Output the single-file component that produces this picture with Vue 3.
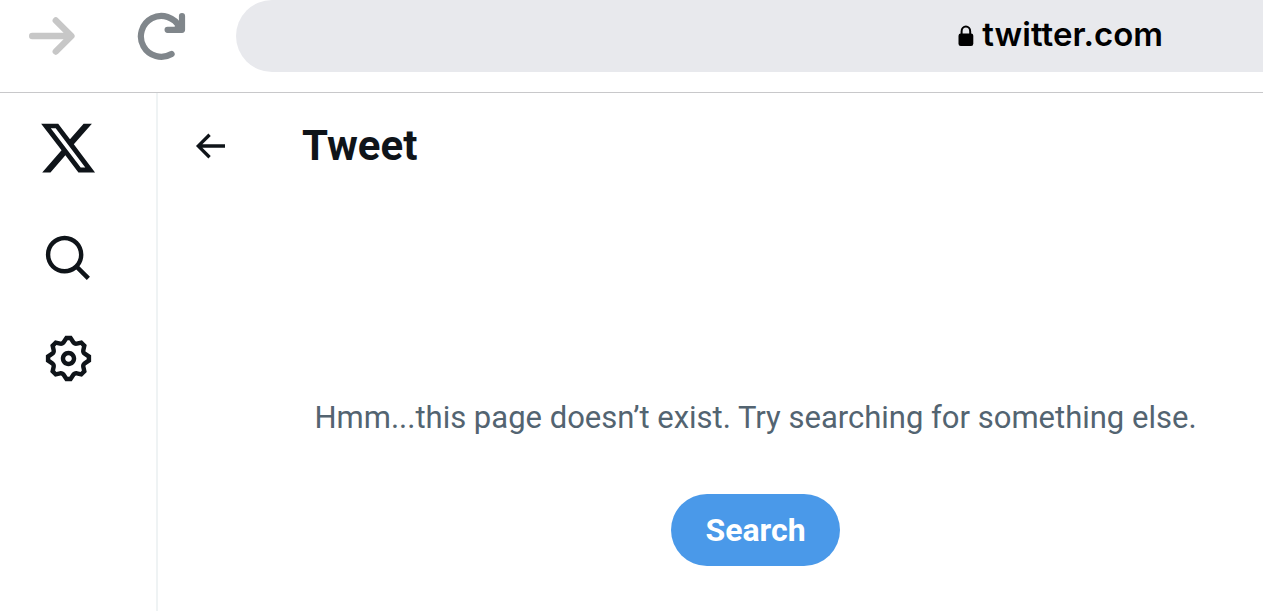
<script setup>
const gearPath =
  'M10.54 1.75h2.92l1.57 2.36c.11.17.32.25.53.21l2.53-.59 2.17 2.17-.58 2.54c-.05.2.04.41.21.53l2.36 1.57v2.92l-2.36 1.57c-.17.12-.26.33-.21.53l.58 2.54-2.17 2.17-2.53-.59c-.21-.04-.42.04-.53.21l-1.57 2.36h-2.92l-1.58-2.36c-.11-.17-.32-.25-.52-.21l-2.54.59-2.17-2.17.58-2.54c.05-.2-.03-.41-.21-.53l-2.35-1.57v-2.92L4.1 8.97c.18-.12.26-.33.21-.53L3.73 5.9 5.9 3.73l2.54.59c.2.04.41-.04.52-.21l1.58-2.36zm1.07 2l-.98 1.47C10.05 6.08 9 6.5 7.99 6.27l-1.46-.34-.6.6.33 1.46c.24 1.01-.18 2.07-1.05 2.64l-1.46.98v.78l1.46.98c.87.57 1.29 1.63 1.05 2.64l-.33 1.46.6.6 1.46-.34c1.01-.23 2.06.19 2.64 1.05l.98 1.47h.78l.97-1.47c.58-.86 1.63-1.28 2.65-1.05l1.45.34.61-.6-.34-1.46c-.23-1.01.18-2.07 1.05-2.64l1.47-.98v-.78l-1.47-.98c-.87-.57-1.28-1.63-1.05-2.64l.34-1.46-.61-.6-1.45.34c-1.02.23-2.07-.19-2.65-1.05l-.97-1.47h-.78zM12 10.5c-.83 0-1.5.67-1.5 1.5s.67 1.5 1.5 1.5c.82 0 1.5-.67 1.5-1.5s-.68-1.5-1.5-1.5zM8.5 12c0-1.93 1.56-3.5 3.5-3.5 1.93 0 3.5 1.57 3.5 3.5s-1.57 3.5-3.5 3.5c-1.94 0-3.5-1.57-3.5-3.5z'
const searchPath =
  'M10.25 3.75c-3.59 0-6.5 2.91-6.5 6.5s2.91 6.5 6.5 6.5c1.795 0 3.419-.726 4.596-1.904 1.178-1.177 1.904-2.801 1.904-4.596 0-3.59-2.91-6.5-6.5-6.5zm-8.5 6.5c0-4.694 3.806-8.5 8.5-8.5s8.5 3.806 8.5 8.5c0 1.986-.682 3.815-1.824 5.262l4.781 4.781-1.414 1.414-4.781-4.781c-1.447 1.142-3.276 1.824-5.262 1.824-4.694 0-8.5-3.806-8.5-8.5z'
const logoPath =
  'M18.244 2.25h3.308l-7.227 8.26 8.502 11.24H16.17l-5.214-6.817L4.99 21.75H1.68l7.73-8.835L1.254 2.25H8.08l4.713 6.231zm-1.161 17.52h1.833L7.084 4.126H5.117z'
const backPath =
  'M7.414 13l5.043 5.04-1.414 1.42L3.586 12l7.457-7.46 1.414 1.42L7.414 11H21v2H7.414z'
</script>

<template>
  <div class="window">
    <div class="toolbar">
      <button class="icon-button forward" type="button" aria-label="Forward" disabled>
        <svg width="48" height="40" viewBox="0 0 48 40" fill="none" stroke="currentColor" stroke-width="6.4" stroke-linecap="round" stroke-linejoin="round">
          <path d="M4.2 20H43M27.8 4.4 43.4 20 27.8 35.6" />
        </svg>
      </button>
      <button class="icon-button reload" type="button" aria-label="Reload">
        <svg width="50" height="50" viewBox="0 0 50 50" fill="none" stroke="currentColor" stroke-width="6.2" stroke-linecap="round" stroke-linejoin="round">
          <path d="M35.6 43A20.4 20.4 0 1 1 43.6 16.4" />
          <path d="M46 5V18.8H31.6" />
          <path d="M37 18.8 46 9.8V18.8Z" fill="currentColor" stroke-width="2" />
        </svg>
      </button>
      <button class="address" type="button">
        <svg width="16" height="22" viewBox="0 0 16 22">
          <rect x="0.5" y="8.5" width="14.8" height="12.5" rx="2.2" fill="currentColor" />
          <path d="M3.6 10V6.4a4.3 4.8 0 0 1 8.6 0V10" fill="none" stroke="currentColor" stroke-width="2" />
        </svg>
        <span>twitter.com</span>
      </button>
    </div>

    <div class="page">
      <nav class="sidebar" aria-label="Primary">
        <a class="logo" href="#home" aria-label="X">
          <svg width="60" height="60" viewBox="0 0 24 24"><path :d="logoPath" /></svg>
        </a>
        <a href="#explore" aria-label="Explore">
          <svg width="53" height="53" viewBox="0 0 24 24"><path :d="searchPath" /></svg>
        </a>
        <a href="#settings" aria-label="Settings">
          <svg width="53" height="53" viewBox="0 0 24 24"><path :d="gearPath" /></svg>
        </a>
      </nav>

      <main class="content">
        <header class="heading">
          <button class="icon-button back" type="button" aria-label="Back">
            <svg width="40" height="40" viewBox="0 0 24 24"><path :d="backPath" /></svg>
          </button>
          <h1>Tweet</h1>
        </header>
        <section class="empty">
          <p>Hmm...this page doesn’t exist. Try searching for something else.</p>
          <a class="search" href="#search">Search</a>
        </section>
      </main>
    </div>
  </div>
</template>

<style>
body {
  margin: 0;
  background: #fff;
}
</style>

<style scoped>
.window {
  display: flex;
  flex-direction: column;
  min-height: 100vh;
  overflow: hidden;
  color: #0f1419;
  font-family: Roboto, "Noto Sans", sans-serif;
}

svg {
  display: block;
  flex: none;
}

button {
  margin: 0;
  border: 0;
  font: inherit;
}

.icon-button {
  padding: 0;
  background: none;
  color: inherit;
}

.toolbar {
  display: flex;
  align-items: center;
  padding: 0 0 20px 28px;
  border-bottom: 1px solid #c8c8ca;
}

.toolbar .forward {
  color: #c7c7c7;
}

.toolbar .reload {
  margin: 0 50px 0 60px;
  color: #80868b;
}

.address {
  display: flex;
  flex: 1;
  align-items: center;
  justify-content: flex-end;
  gap: 8px;
  height: 72px;
  padding: 0 100px 4px 36px;
  border-radius: 36px 0 0 36px;
  background: #e8e9ed;
  color: #000;
  font-family: Inter, "Liberation Sans", sans-serif;
  font-size: 33px;
  font-weight: 600;
}

.address svg {
  margin-top: 4px;
}

.page {
  display: flex;
  flex: 1;
}

.sidebar {
  display: flex;
  flex: none;
  flex-direction: column;
  align-items: center;
  gap: 47px;
  box-sizing: border-box;
  width: 158px;
  padding: 25px 20px 0 0;
  border-right: 2px solid #eff3f4;
}

.sidebar a {
  color: inherit;
}

.sidebar .logo {
  margin-bottom: 7px;
}

.sidebar svg,
.back svg {
  fill: currentColor;
}

.content {
  flex: 1;
}

.heading {
  display: flex;
  align-items: center;
  gap: 72px;
  height: 106px;
  padding-left: 32px;
}

h1 {
  margin: 0;
  font-size: 42px;
  font-weight: 700;
  line-height: 48px;
}

.empty {
  display: flex;
  flex-direction: column;
  align-items: center;
  gap: 56px;
  padding: 199px 0 0 90px;
}

.empty p {
  margin: 0;
  color: #536471;
  font-size: 31px;
  line-height: 40px;
  white-space: nowrap;
}

.search {
  padding: 0 34px;
  border-radius: 36px;
  background: #4a99e9;
  color: #fff;
  font-size: 32px;
  font-weight: 700;
  line-height: 72px;
  text-decoration: none;
}
</style>
